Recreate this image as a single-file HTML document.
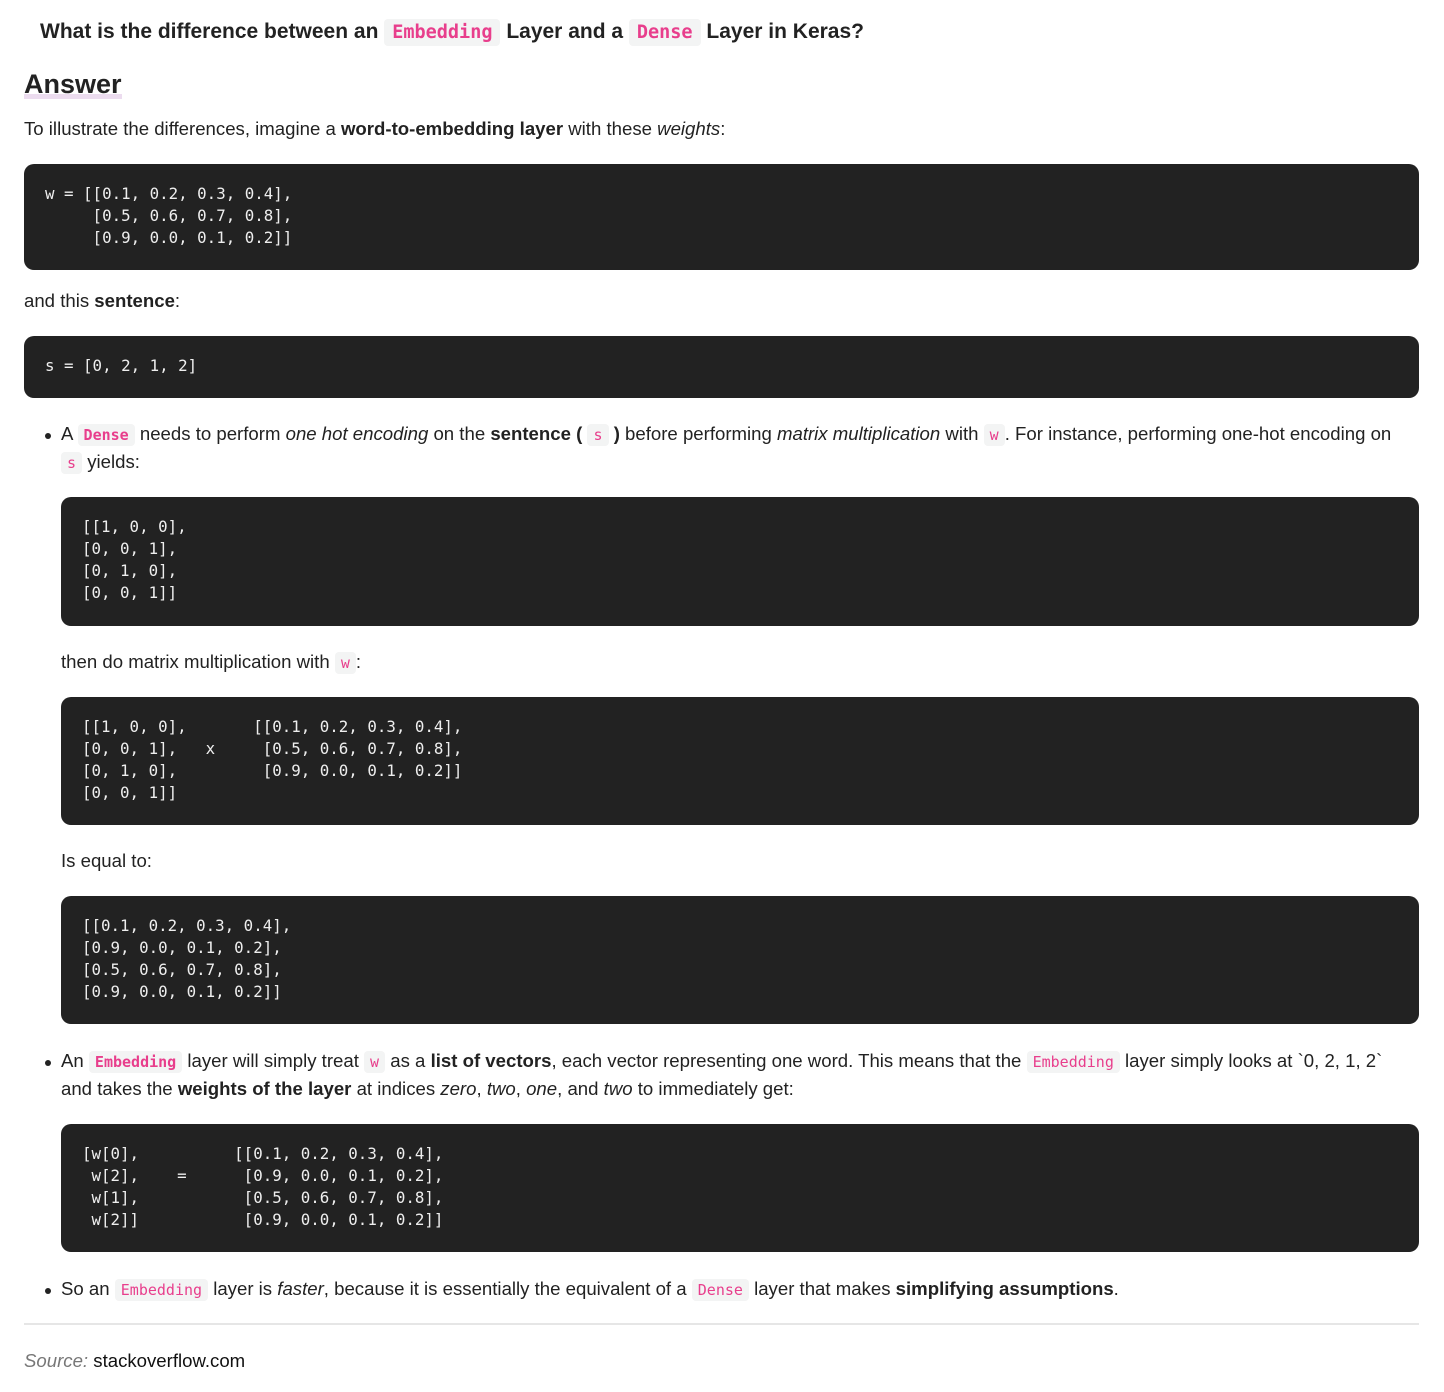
<!DOCTYPE html>
<html><head><meta charset="utf-8"><style>
*{margin:0;padding:0;box-sizing:border-box}
body{width:1444px;height:1392px;background:#fff;position:relative;font-family:"Liberation Sans",Arial,sans-serif;color:#222;font-size:18.6px;overflow:hidden}
.a{position:absolute;white-space:nowrap}
.t{line-height:28px}
code{font-family:"DejaVu Sans Mono","Liberation Mono",monospace;color:#e83e8c;background:#f3f4f4;border-radius:4px;padding:2px 6px;font-size:15px}
code.b{font-weight:bold}
.pre{position:absolute;background:#222;border-radius:10px;color:#eee;font-family:"DejaVu Sans Mono","Liberation Mono",monospace;font-size:15.8px;line-height:22px;padding:19px 21px;white-space:pre;right:25px}
h1{font-size:21px;font-weight:bold}
h1 code{font-size:18.5px;font-weight:bold;padding:3px 8px}
.ans{font-size:27px;font-weight:bold;background:linear-gradient(transparent 78%,#ecdcef 78%,#ecdcef 92%,transparent 92%)}
.dot{position:absolute;width:6px;height:6px;border-radius:50%;background:#222}
</style></head><body>
<h1 class="a" style="left:40px;top:18px;line-height:28px">What is the difference between an <code>Embedding</code> Layer and a <code>Dense</code> Layer in Keras?</h1>
<div class="a ans" style="left:24px;top:66px;line-height:36px">Answer</div>
<div class="a t" style="left:24px;top:115px">To illustrate the differences, imagine a <b>word-to-embedding layer</b> with these <i>weights</i>:</div>
<div class="pre" style="left:24px;top:164px;height:106px">w = [[0.1, 0.2, 0.3, 0.4],
     [0.5, 0.6, 0.7, 0.8],
     [0.9, 0.0, 0.1, 0.2]]</div>
<div class="a t" style="left:24px;top:287px">and this <b>sentence</b>:</div>
<div class="pre" style="left:24px;top:336px;height:62px">s = [0, 2, 1, 2]</div>

<div class="dot" style="left:45px;top:433px"></div>
<div class="a t" style="left:61px;top:420px">A <code class="b">Dense</code> needs to perform <i>one hot encoding</i> on the <b>sentence (</b> <code>s</code> <b>)</b> before performing <i>matrix multiplication</i> with <code>w</code>. For instance, performing one-hot encoding on</div>
<div class="a t" style="left:61px;top:448px"><code>s</code> yields:</div>
<div class="pre" style="left:61px;top:497px;height:129px">[[1, 0, 0],
[0, 0, 1],
[0, 1, 0],
[0, 0, 1]]</div>
<div class="a t" style="left:61px;top:648px">then do matrix multiplication with <code>w</code>:</div>
<div class="pre" style="left:61px;top:697px;height:128px">[[1, 0, 0],       [[0.1, 0.2, 0.3, 0.4],
[0, 0, 1],   x     [0.5, 0.6, 0.7, 0.8],
[0, 1, 0],         [0.9, 0.0, 0.1, 0.2]]
[0, 0, 1]]</div>
<div class="a t" style="left:61px;top:847px">Is equal to:</div>
<div class="pre" style="left:61px;top:896px;height:128px">[[0.1, 0.2, 0.3, 0.4],
[0.9, 0.0, 0.1, 0.2],
[0.5, 0.6, 0.7, 0.8],
[0.9, 0.0, 0.1, 0.2]]</div>

<div class="dot" style="left:45px;top:1060px"></div>
<div class="a t" style="left:61px;top:1047px">An <code class="b">Embedding</code> layer will simply treat <code>w</code> as a <b>list of vectors</b>, each vector representing one word. This means that the <code>Embedding</code> layer simply looks at `0, 2, 1, 2`</div>
<div class="a t" style="left:61px;top:1075px">and takes the <b>weights of the layer</b> at indices <i>zero</i>, <i>two</i>, <i>one</i>, and <i>two</i> to immediately get:</div>
<div class="pre" style="left:61px;top:1124px;height:128px">[w[0],          [[0.1, 0.2, 0.3, 0.4],
 w[2],    =      [0.9, 0.0, 0.1, 0.2],
 w[1],           [0.5, 0.6, 0.7, 0.8],
 w[2]]           [0.9, 0.0, 0.1, 0.2]]</div>

<div class="dot" style="left:45px;top:1288px"></div>
<div class="a t" style="left:61px;top:1275px">So an <code>Embedding</code> layer is <i>faster</i>, because it is essentially the equivalent of a <code>Dense</code> layer that makes <b>simplifying assumptions</b>.</div>
<div class="a" style="left:24px;top:1323px;width:1395px;height:2px;background:#e6e6e6"></div>
<div class="a t" style="left:24px;top:1347px"><i style="color:#777">Source:</i> <span style="color:#111">stackoverflow.com</span></div>
</body></html>
